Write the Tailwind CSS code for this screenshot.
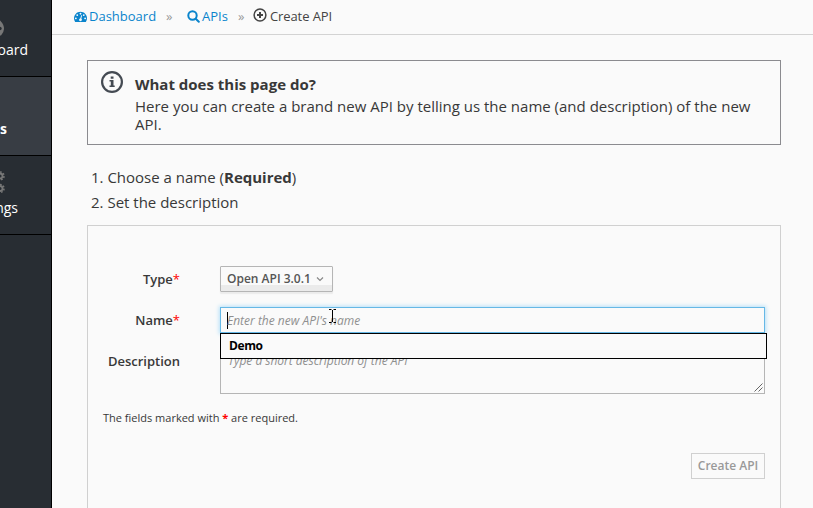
<!DOCTYPE html>
<html lang="en">
<head>
<meta charset="utf-8">
<title>Create API</title>
<script src="https://cdn.jsdelivr.net/npm/@tailwindcss/browser@4"></script>
</head>
<body class="flex h-[508px] w-[813px] overflow-hidden bg-[#fafafa] font-['Open_Sans','Noto_Sans',sans-serif] text-[#383838]">
<svg class="hidden">
  <symbol id="gauge" viewBox="0 0 1792 1792"><path d="M384 1152q0-53-37.5-90.5t-90.5-37.5-90.5 37.5-37.5 90.5 37.5 90.5 90.5 37.5 90.5-37.5 37.5-90.5zm192-448q0-53-37.5-90.5t-90.5-37.5-90.5 37.5-37.5 90.5 37.5 90.5 90.5 37.5 90.5-37.5 37.5-90.5zm428 481l101-382q6-26-7.5-48.5t-38.5-29.5-48 6.5-30 39.5l-101 382q-60 5-107 43.5t-63 98.5q-20 77 20 146t117 89 146-20 89-117q16-60-6-117t-72-91zm660-33q0-53-37.5-90.5t-90.5-37.5-90.5 37.5-37.5 90.5 37.5 90.5 90.5 37.5 90.5-37.5 37.5-90.5zm-640-640q0-53-37.5-90.5t-90.5-37.5-90.5 37.5-37.5 90.5 37.5 90.5 90.5 37.5 90.5-37.5 37.5-90.5zm448 192q0-53-37.5-90.5t-90.5-37.5-90.5 37.5-37.5 90.5 37.5 90.5 90.5 37.5 90.5-37.5 37.5-90.5zm320 448q0 261-141 483-19 29-54 29h-1402q-35 0-54-29-141-221-141-483 0-182 71-348t191-286 286-191 348-71 348 71 286 191 191 286 71 348z"/></symbol>
</svg>

<nav class="flex w-[52px] shrink-0 flex-col overflow-hidden border-r border-black bg-[#282d33] text-sm leading-5 text-white">
  <a class="flex h-[77px] flex-col items-end border-b border-black pt-[18px] pr-[23px]">
    <svg class="mr-[24px] h-[18px] w-[22px]" viewBox="0 0 22 18"><path fill="#777" d="M3 17.500Q0 14 0 11a11 11 0 0 1 22 0Q22 14 19 17.500Z"/><circle cx="18" cy="10.500" r="1.700" fill="#282d33"/></svg>
    <span class="mt-[4px] whitespace-nowrap">Dashboard</span>
  </a>
  <a class="flex h-[79px] flex-col items-end justify-end border-b border-black bg-[#383d44] pr-[44px] pb-[16px] font-bold"><span>APIs</span></a>
  <a class="flex h-[79px] flex-col items-end border-b border-black pt-[14px] pr-[33px]">
    <svg class="mr-[13px] h-[24px] w-[14px] shrink-0" viewBox="0 0 14 24" fill="none" stroke="#777"><g stroke-width="1.800"><circle cx="9" cy="6" r="2.500"/><circle cx="9" cy="18.500" r="2.500"/></g><path stroke-width="1.600" stroke-dasharray="1.700 1.441" d="M9 2a4 4 0 1 1 0 8a4 4 0 1 1 0-8M9 14.500a4 4 0 1 1 0 8a4 4 0 1 1 0-8"/></svg>
    <span class="mt-[4px]">Settings</span>
  </a>
</nav>

<main class="min-w-0 flex-1">
  <header class="flex h-[35px] items-center border-b border-[#d3d3d3] pb-[2px] pl-[22px] text-[13px] leading-5 whitespace-nowrap">
    <a class="flex w-[92px] items-center text-[#0a84cc]"><svg class="mr-[2px] size-[13px] fill-current"><use href="#gauge"/></svg><span>Dashboard</span></a>
    <span class="w-[21px] text-[#999]">»</span>
    <a class="flex w-[51px] items-center text-[#0a84cc]"><svg class="mr-[2px] size-[13px]" viewBox="0 0 13 13" fill="none" stroke="currentColor" stroke-width="2"><circle cx="5.5" cy="5.5" r="4.2"/><path stroke-linecap="round" d="M8.7 8.7 11.8 11.8"/></svg><span>APIs</span></a>
    <span class="w-[15px] text-[#999]">»</span>
    <span class="flex items-center tracking-[-0.1px] text-[#444]"><svg class="mr-[3px] size-[14px] -translate-y-px" viewBox="0 0 14 14" fill="none" stroke="currentColor"><circle cx="7" cy="7" r="5.9" stroke-width="1.5"/><path stroke-width="2" d="M7 4v6M4 7h6"/></svg><span>Create API</span></span>
  </header>

  <section class="mt-[25px] ml-[35px] flex h-[85px] w-[694px] border border-[#8b8b8f] pt-[10px] pl-[13px]">
    <svg class="mr-[12px] size-[22px] shrink-0" viewBox="0 0 22 22" fill="#444a52"><circle cx="11" cy="11" r="9.9" fill="none" stroke="#444a52" stroke-width="2.2"/><path d="M9.7 5.5h2.8v2.2H9.7zM8.5 9h4v5.5h1.2V16H8.5v-1.5h1.3v-4H8.5z"/></svg>
    <div class="whitespace-nowrap text-[15px] leading-[18px]">
      <h2 class="pt-[4px] font-bold">What does this page do?</h2>
      <p class="mt-[4px]">Here you can create a brand new API by telling us the name (and description) of the new<br>API.</p>
    </div>
  </section>

  <ol class="mt-[20px] ml-[39px] text-[15px] leading-[25px] whitespace-nowrap">
    <li>1. Choose a name (<b>Required</b>)</li>
    <li>2. Set the description</li>
  </ol>

  <form class="mt-[10px] ml-[35px] h-[300px] w-[694px] border border-[#d0d0d0] px-[15px] pt-[40px] text-[13px]">
    <div class="flex h-[27px]">
      <label class="mr-[40px] w-[77px] text-right leading-[26px] font-semibold"><span>Type</span><span class="font-normal text-[#f00]">*</span></label>
      <div class="flex h-[26px] w-[113px] items-center rounded-[1px] border border-[#b5b5b5] bg-linear-to-b from-[#fafafa] from-75% to-[#ebebeb] to-75% pl-[6px] text-[12px] font-semibold whitespace-nowrap text-[#555] shadow-[0_2px_1px_#ebebeb]"><span class="w-[84px]">Open API 3.0.1</span><svg class="ml-[5px] h-[6px] w-[8px]" viewBox="0 0 8 6" fill="none" stroke="#888" stroke-width="1.2"><path d="M1 1.5 4 4.5 7 1.5"/></svg></div>
    </div>
    <div class="relative mt-[14px] flex h-[27px]">
      <label class="mr-[40px] w-[77px] text-right leading-[26px] font-semibold"><span>Name</span><span class="font-normal text-[#f00]">*</span></label>
      <div class="flex h-[26px] w-[545px] items-center border border-[#66b8e6] pl-[6px] text-[12px] text-[#909090] italic shadow-[0_0_4px_1px_#b5e0f8]"><i class="-mr-px h-[17px] w-px bg-black"></i><span class="translate-y-px">Enter the new API's name</span></div>
      <svg class="absolute top-[1px] left-[225px] h-[16px] w-[9px]" viewBox="0 0 9 16" fill="none" stroke="#000"><path d="M1 1.5h2.5M5.500 1.500H8M4.500 2v12M1 14.500h2.500M5.500 14.500H8"/></svg>
      <div class="absolute top-[26px] left-[117px] z-10 flex h-[26px] w-[547px] items-center border border-black bg-[#fafafa] pl-[8px] text-[12px] font-bold tracking-[-0.4px] text-black">Demo</div>
    </div>
    <div class="mt-[14px] flex h-[47px]">
      <label class="mr-[40px] w-[77px] text-right leading-[26px] font-semibold">Description</label>
      <div class="relative h-[46px] w-[545px] border border-[#b5b5b5] pt-[3px] pl-[7px] text-[12px] leading-[18px] tracking-[-0.03px] text-[#909090] italic">Type a short description of the API<svg class="absolute right-[1px] bottom-[1px] size-[9px]" viewBox="0 0 9 9" stroke="#666"><path d="M.5 8.500 8.500.5M4.500 8.500 8.500 4.500"/></svg></div>
    </div>
    <p class="mt-[13px] text-[11px] leading-[20px]">The fields marked with <span class="font-bold text-[#f00]">*</span> are required.</p>
    <div class="mt-[25px] flex justify-end"><button type="button" class="h-[26px] w-[74px] border border-[#d0d0d0] text-[12px] font-semibold whitespace-nowrap text-[#999]">Create API</button></div>
  </form>
</main>
</body>
</html>
